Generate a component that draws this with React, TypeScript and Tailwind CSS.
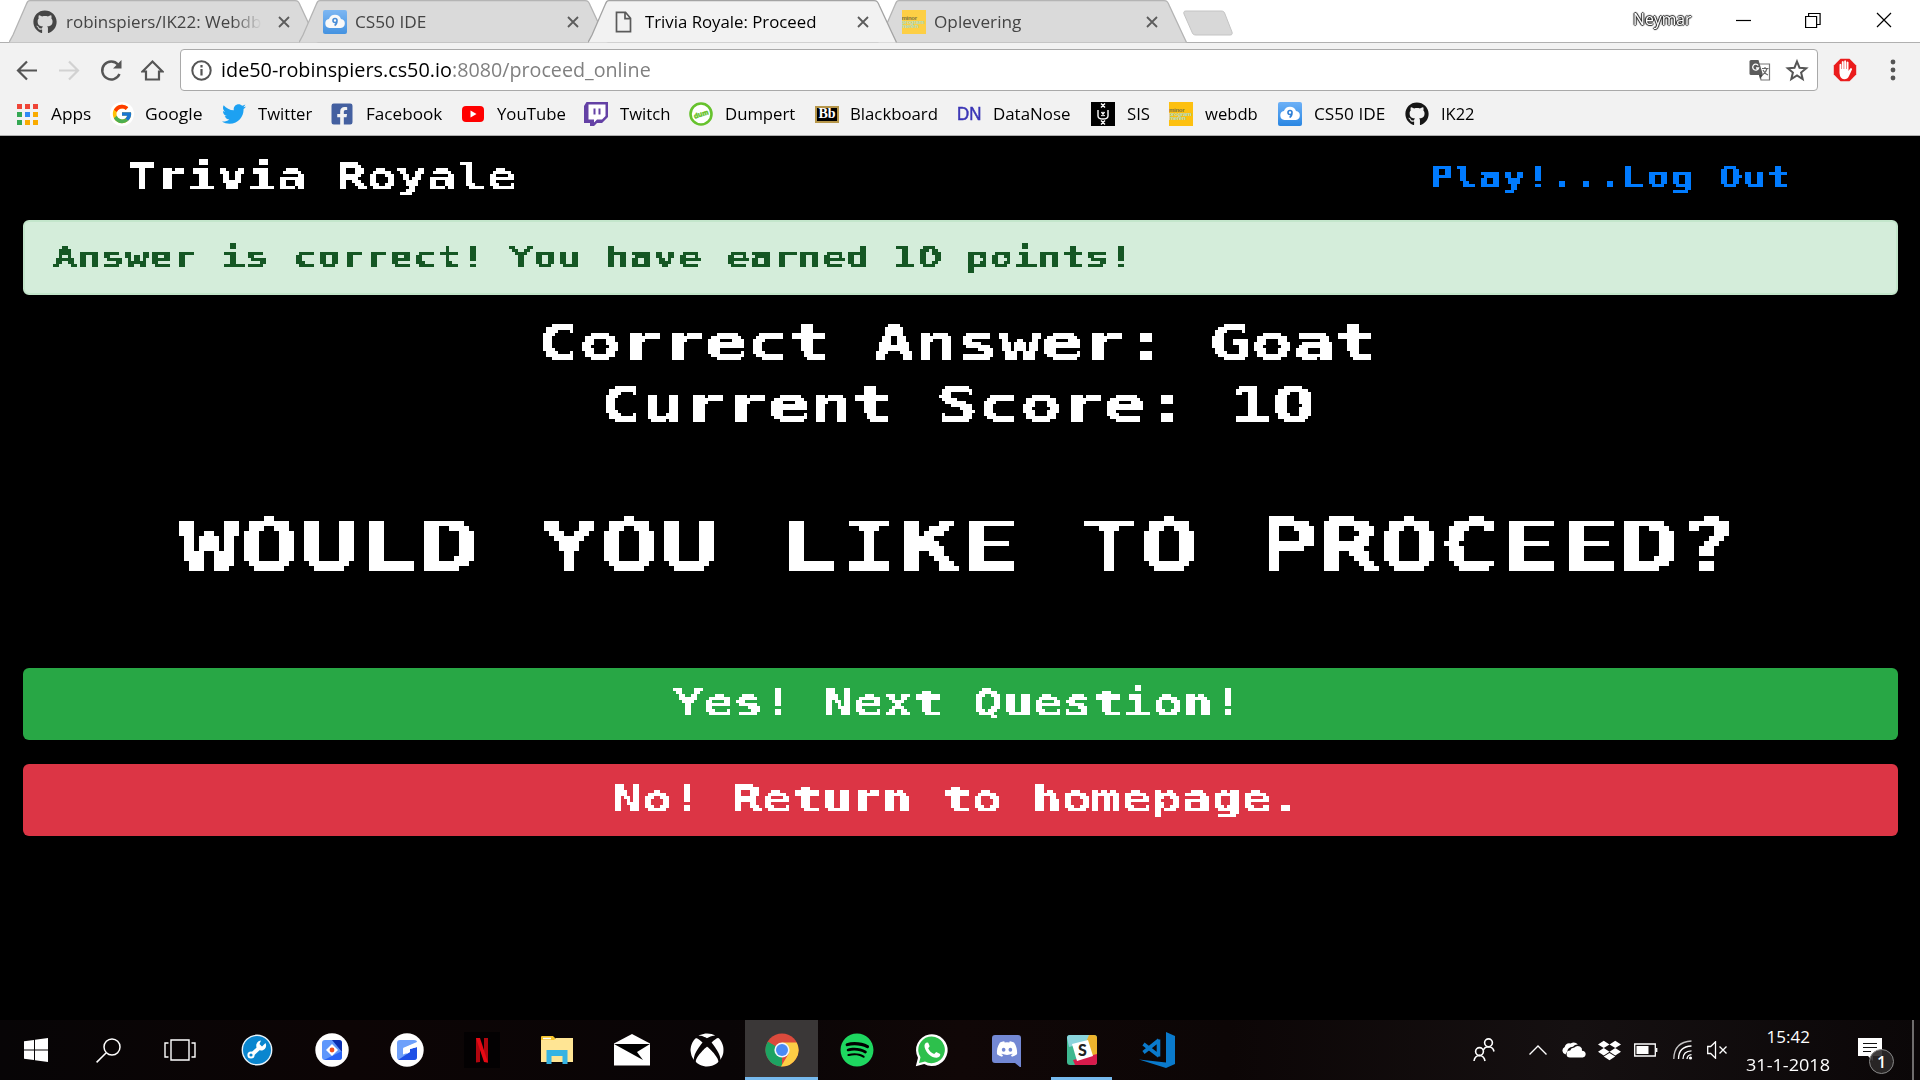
import React, { useLayoutEffect, useRef, useState } from "react";
import { FaDropbox, FaFacebookSquare, FaGithub, FaSpotify, FaTwitter, FaXbox, FaDiscord } from "react-icons/fa";
import { FcGoogle } from "react-icons/fc";

/* Text stretched or condensed horizontally so that it fills a given width. */
function Fit({ w, className = "", children }: { w: number; className?: string; children: React.ReactNode }) {
  const ref = useRef<HTMLSpanElement>(null);
  const [scale, setScale] = useState(1);
  useLayoutEffect(() => {
    if (ref.current) setScale(w / ref.current.offsetWidth);
  }, [w]);
  return (
    <span className="block shrink-0 text-left" style={{ width: w }}>
      <span
        ref={ref}
        className={"inline-block origin-left whitespace-pre " + className}
        style={{ transform: `scaleX(${scale})` }}
      >
        {children}
      </span>
    </span>
  );
}

/* Filter that snaps text to a grid of square cells, for the arcade lettering. */
function Mosaic({ id, cell }: { id: string; cell: number }) {
  const mid = (cell - 1) / 2;
  return (
    <filter id={id} x="0" y="0" width="100%" height="100%" colorInterpolationFilters="sRGB">
      <feGaussianBlur in="SourceGraphic" stdDeviation={cell / 5} result="soft" />
      <feFlood x={mid} y={mid} width="1" height="1" floodColor="#000" />
      <feComposite x="0" y="0" width={cell} height={cell} />
      <feTile result="grid" />
      <feComposite in="soft" in2="grid" operator="in" />
      <feComponentTransfer>
        <feFuncA type="discrete" tableValues="0 1" />
      </feComponentTransfer>
      <feMorphology operator="dilate" radius={mid} />
    </filter>
  );
}

/* A zero without the centre dot, kept to one monospace column. */
function Zero() {
  return (
    <span className="inline-block w-[0.602em] text-center font-['DejaVu_Sans_Condensed','DejaVu_Sans'] leading-none [font-stretch:condensed]">0</span>
  );
}

function CloudNine() {
  return (
    <svg className="size-6" viewBox="0 0 24 24">
      <defs>
        <linearGradient id="c9" x1="0" y1="0" x2="0" y2="1">
          <stop offset="0" stopColor="#6db1f7" />
          <stop offset="1" stopColor="#2a86e2" />
        </linearGradient>
      </defs>
      <rect width="24" height="24" rx="2" fill="url(#c9)" />
      <path d="M6.5 18a4.5 4.5 0 0 1-.6-8.900A6.500 6.500 0 0 1 18 8.900 4.600 4.600 0 0 1 17.800 18z" fill="#fff" />
      <path d="M14 10.500a2 2 0 1 0-2 2c1.400 0 2-1 2-2zc0 2.500-.6 4-2.400 5" fill="none" stroke="#2f7fd6" strokeWidth="1.600" />
    </svg>
  );
}

function Minor({ className }: { className: string }) {
  return (
    <span className={"flex size-6 flex-col justify-center overflow-hidden font-['Liberation_Sans'] text-[6px] leading-[4px] font-bold tracking-[-0.3px] " + className}>
      <span className="text-[#7d7440]">minor</span>
      <span className="text-[#a9dccb]">program</span>
      <span className="text-[#a9dccb]">meren</span>
    </span>
  );
}

function PageIcon() {
  return (
    <svg className="size-6" viewBox="0 0 24 24" fill="none" stroke="#5a5a5a" strokeWidth="1.700">
      <path d="M4.500 2.300h9l5 6v13.400h-14zM13 2.300v6.400h5.500" />
    </svg>
  );
}

function Tab({ icon, title, w, active = false, fade = false }: { icon: React.ReactNode; title: string; w: number; active?: boolean; fade?: boolean }) {
  return (
    <div className={"relative flex h-[43px] w-[289.5px] shrink-0 items-center " + (active ? "z-10" : "")}>
      <svg className="absolute top-0 left-0 h-[43px] w-[309px]" viewBox="0 0 309 43">
        <path
          d="M0 42.500L4 35L17 5C18.500 1.500 19 .7 21 .7H286C289 .7 290 2 291.500 6L305 35L308.500 42.500"
          fill={active ? "#f2f2f2" : "#dadada"}
          stroke={active ? "#a3a3a3" : "#b4b4b4"}
          strokeWidth="1.300"
        />
      </svg>
      <div className="relative flex w-full items-center pl-6">
        <span className="flex w-[32.5px] shrink-0">{icon}</span>
        <span className={"w-[200px] overflow-hidden " + (fade ? "[mask-image:linear-gradient(to_right,black_83%,transparent_98%)]" : "")}>
          <Fit w={w} className={"text-[16px] leading-6 " + (active ? "text-black" : "text-[#444]")}>{title}</Fit>
        </span>
        <svg className="ml-3 size-3 shrink-0" viewBox="0 0 12 12" stroke="#5c5c5c" strokeWidth="1.800">
          <path d="M1 1 11 11M11 1 1 11" />
        </svg>
      </div>
    </div>
  );
}

function AppsIcon() {
  return (
    <span className="grid size-[21px] grid-cols-3 gap-[3px]">
      <i className="bg-[#ef4537]" /><i className="bg-[#ef4537]" /><i className="bg-[#ef4537]" />
      <i className="bg-[#34a853]" /><i className="bg-[#2f8af5]" /><i className="bg-[#f9ab00]" />
      <i className="bg-[#34a853]" /><i className="bg-[#f9ab00]" /><i className="bg-[#f9ab00]" />
    </span>
  );
}

const bookmarks: { name: string; w: number; item: string; off: string; icon: React.ReactNode }[] = [
  { name: "Apps", w: 40, item: "w-[93px]", off: "w-[34px]", icon: <AppsIcon /> },
  { name: "Google", w: 58, item: "w-[112px]", off: "w-[35px]", icon: <span className="flex size-6 items-center justify-center rounded-full bg-white"><FcGoogle className="size-[22px]" /></span> },
  { name: "Twitter", w: 54, item: "w-[108px]", off: "w-[36px]", icon: <FaTwitter className="size-6 text-[#1da1f2]" /> },
  { name: "Facebook", w: 76, item: "w-[131px]", off: "w-[36px]", icon: <FaFacebookSquare className="size-6 text-[#4460a0]" /> },
  {
    name: "YouTube", w: 69, item: "w-[123px]", off: "w-[36px]",
    icon: (
      <svg className="size-6" viewBox="0 0 24 24"><rect x="1" y="4" width="22" height="16" rx="4" fill="#f00" /><path d="M9.500 8.500v7l6-3.500z" fill="#fff" /></svg>
    ),
  },
  {
    name: "Twitch", w: 50, item: "w-[105px]", off: "w-[36px]",
    icon: (
      <svg className="size-6" viewBox="0 0 24 24"><path d="M2.500 0H24v15l-6 6h-5l-3 3H6v-3H0V4z" fill="#6441a5" /><path d="M4.500 2.500h17V14l-3.500 3.500h-5l-3 3v-3H4.500z" fill="#fff" /><path d="M10.500 6.500v6M15.500 6.500v6" stroke="#6441a5" strokeWidth="2" /></svg>
    ),
  },
  {
    name: "Dumpert", w: 70, item: "w-[126px]", off: "w-[36px]",
    icon: (
      <svg className="size-6" viewBox="0 0 24 24"><circle cx="12" cy="12" r="10.500" fill="#fff" stroke="#66c22d" strokeWidth="2.600" /><text x="12" y="14.500" transform="rotate(-18 12 12)" textAnchor="middle" fontFamily="Liberation Sans" fontWeight="bold" fontSize="7" fill="#66c22d" stroke="#66c22d" strokeWidth=".5">dum</text></svg>
    ),
  },
  {
    name: "Blackboard", w: 88, item: "w-[142px]", off: "w-[35px]",
    icon: <span className="flex h-[17px] w-6 items-center justify-center border-2 border-[#b6964a] bg-black font-['Liberation_Serif'] text-[14px] leading-none font-bold text-white">Bb</span>,
  },
  { name: "DataNose", w: 77, item: "w-[134px]", off: "w-[36px]", icon: <Fit w={24} className="font-['Liberation_Sans'] text-[19px] leading-6 text-[#3a35b5] [-webkit-text-stroke:0.5px]">DN</Fit> },
  {
    name: "SIS", w: 23, item: "w-[78px]", off: "w-[36px]",
    icon: (
      <svg className="size-6" viewBox="0 0 24 24" fill="none" stroke="#fff" strokeWidth="1.400"><path d="M0 0h24v24H0z" fill="#000" stroke="none" /><path d="m10 1.500 4 4m0-4-4 4M10 18.500l4 4m0-4-4 4M10.500 10l3 4m0-4-3 4M7 8v6q0 3 5 3t5-3V8" /></svg>
    ),
  },
  { name: "webdb", w: 53, item: "w-[109px]", off: "w-[36px]", icon: <Minor className="bg-[#fdc010]" /> },
  { name: "CS50 IDE", w: 71, item: "w-[127px]", off: "w-[36px]", icon: <CloudNine /> },
  { name: "IK22", w: 34, item: "w-[90px]", off: "w-[36px]", icon: <FaGithub className="size-6 text-[#161616]" /> },
];

function Browser() {
  return (
    <header className="h-[136px] w-full border-b border-[#b0b0b0] bg-[#f2f2f2] font-['Open_Sans',sans-serif] text-black">
      <div className="flex h-[43px] border-b border-[#b0b0b0] bg-white pl-[9px]">
        <Tab icon={<FaGithub className="size-6 text-[#454545]" />} title="robinspiers/IK22: Webdb" w={195} fade />
        <Tab icon={<span className="opacity-85"><CloudNine /></span>} title="CS50 IDE" w={71} />
        <Tab icon={<PageIcon />} title="Trivia Royale: Proceed" w={171} active />
        <Tab icon={<Minor className="bg-[#fdcf45]" />} title="Oplevering" w={87} />
        <svg className="mt-[10px] ml-[15px] h-[26px] w-[52px]" viewBox="0 0 52 26">
          <path d="M4 1H39c2 0 3 .6 3.600 2L50 22c.6 2 0 3-2 3H14c-2 0-3-.6-3.600-2L2 4C1.400 2 2 1 4 1z" fill="#d8d8d8" stroke="#c4c4c4" />
        </svg>
        <div className="ml-auto flex items-start pr-[28px]">
          <div className="mt-[7px] mr-[45px] text-white [text-shadow:1px_0_1px_#222,-1px_0_1px_#222,0_1px_1px_#222,0_-1px_1px_#222]">
            <Fit w={58} className="text-[15.500px] leading-6">Neymar</Fit>
          </div>
          <svg className="mt-3 mr-[53px] h-4 w-4" viewBox="0 0 16 16"><path d="M0 8.500h15" stroke="#000" strokeWidth="1.200" /></svg>
          <svg className="mt-3 mr-[55px] h-4 w-4" viewBox="0 0 16 16" fill="none" stroke="#000" strokeWidth="1.200"><path d="M.6 4.500h11v11H.6zM3.600 4.500v-3h11.500v11h-3.500" /></svg>
          <svg className="mt-3 h-4 w-4" viewBox="0 0 16 16" fill="none" stroke="#000" strokeWidth="1.200"><path d="m1 1 14 14M15 1 1 15" /></svg>
        </div>
      </div>
      <div className="flex h-[54px] items-center">
        <svg className="ml-4 size-[23px]" viewBox="0 0 23 23" fill="none" stroke="#555" strokeWidth="2.200"><path d="M21 11.500H3M11 2.500l-9 9 9 9" /></svg>
        <svg className="ml-[18px] size-[23px]" viewBox="0 0 23 23" fill="none" stroke="#d2d2d2" strokeWidth="2.200"><path d="M2 11.500h18M12 2.500l9 9-9 9" /></svg>
        <svg className="ml-[20px] size-[23px]" viewBox="0 0 23 23"><path d="M19.500 15A9 9 0 1 1 18 5.500" fill="none" stroke="#555" strokeWidth="2.400" /><path d="M21.500 1v8.500H13z" fill="#555" /></svg>
        <svg className="ml-[18px] size-[23px]" viewBox="0 0 23 23" fill="none" stroke="#555" strokeWidth="2.200"><path d="M1.500 12.500 11.500 2.500l10 10h-3.500v8H5v-8z" /></svg>
        <div className="ml-[16px] flex h-[42px] w-[1638px] items-center rounded-[4px] border border-[#a9a9a9] bg-white pl-[10px]">
          <svg className="size-[21px]" viewBox="0 0 21 21" fill="none" stroke="#555" strokeWidth="2"><circle cx="10.500" cy="10.500" r="9.200" /><path d="M10.500 9v6.500M10.500 5v2.400" strokeWidth="2.200" /></svg>
          <div className="ml-[9px] flex text-[20px] leading-8">
            <Fit w={231}>ide50-robinspiers.cs50.io</Fit>
            <Fit w={199} className="text-[#808080]">:8080/proceed_online</Fit>
          </div>
          <svg className="ml-auto size-[22px]" viewBox="0 0 22 22">
            <path d="M9 5h11.500v16H12z" fill="#fff" stroke="#777" strokeWidth="1.200" />
            <path d="M2 1h7.500l4.500 15H2q-1.500 0-1.500-1.500v-12Q.5 1 2 1z" fill="#5b5b5b" />
            <path d="m10 16 4 0-3 4z" fill="#444" />
            <path d="M9.200 6.500A3 3 0 1 0 9.600 9H7" fill="none" stroke="#fff" strokeWidth="1.300" />
            <path d="M13 9.500h6.500M16 8v1.500M18 9.500q-1 4-4 6M14 11q2 4 5 5" fill="none" stroke="#666" strokeWidth="1.200" />
          </svg>
          <svg className="mr-[8px] ml-[14px] size-[24px]" viewBox="0 0 24 24" fill="none" stroke="#555" strokeWidth="2"><path d="m12 3.500 2.500 6.200 6.700.5-5.100 4.300 1.600 6.500-5.700-3.500L6.300 21l1.600-6.500-5.100-4.300 6.700-.5z" /></svg>
        </div>
        <svg className="ml-[15px] size-[24px]" viewBox="0 0 24 24">
          <path d="M7.500.8h9l6.700 6.700v9l-6.700 6.700h-9L.8 16.500v-9z" fill="#ea1c1c" />
          <path d="M6.500 15V6.500q1-1.500 1.800 0V11h.5V3.800q1-1.500 1.900 0V11h.5V3q1-1.500 1.900 0v8h.5V4.300q1-1.400 1.900 0V13l1.900-2.700q2-.5 1.600 1.200L16 18q-1.500 3.500-5 3.300-4-.3-4.500-6.300z" fill="#fff" />
        </svg>
        <svg className="ml-[33px] h-[24px] w-[6px]" viewBox="0 0 6 24" fill="#555"><circle cx="3" cy="4" r="2.400" /><circle cx="3" cy="12" r="2.400" /><circle cx="3" cy="20" r="2.400" /></svg>
      </div>
      <div className="flex h-[34px] items-center pl-[17px]">
        {bookmarks.map((b) => (
          <div key={b.name} className={"flex shrink-0 items-center " + b.item}>
            <span className={"flex shrink-0 items-center " + b.off}>{b.icon}</span>
            <Fit w={b.w} className="text-[16px] leading-6">{b.name}</Fit>
          </div>
        ))}
      </div>
    </header>
  );
}

function Page() {
  return (
    <main className="flex h-[884px] flex-col bg-black px-[23px] font-['DejaVu_Sans_Mono',monospace] font-bold text-white">
      <svg className="absolute size-0" aria-hidden="true">
        <Mosaic id="cell3" cell={3} />
        <Mosaic id="cell5" cell={5} />
      </svg>
      <nav className="flex h-[84px] items-center justify-between pr-[107px] pb-[2px] pl-[104px]">
        <div className="[filter:url(#cell3)]"><Fit w={390} className="text-[36px] leading-[42px]">Trivia Royale</Fit></div>
        <div className="flex text-[28.8px] leading-[40px] text-[#007bff] [filter:url(#cell3)]">
          <Fit w={120}>Play!</Fit>
          <Fit w={72}>...</Fit>
          <Fit w={168}>Log Out</Fit>
        </div>
      </nav>
      <div className="flex h-[75px] w-[1875px] items-center rounded-[6px] border-2 border-[#c3e6cb] bg-[#d4edda] pb-px pl-[28px] text-[#155724]">
        <div className="[filter:url(#cell3)]"><Fit w={1080} className="text-[28.8px] leading-[40px]">Answer is correct! You have earned 1<Zero /> points!</Fit></div>
      </div>
      <div className="mt-[17px] mr-[6px] flex flex-col items-center">
        <div className="[filter:url(#cell3)]"><Fit w={840} className="text-[50.500px] leading-[62px]">Correct Answer: Goat</Fit></div>
        <div className="[filter:url(#cell3)]"><Fit w={714} className="text-[50.500px] leading-[62px]">Current Score: 1<Zero /></Fit></div>
      </div>
      <h1 className="mt-[65px] mr-[2px] flex justify-center">
        <div className="[filter:url(#cell5)]"><Fit w={1560} className="text-[72px] leading-[90px]">WOULD YOU LIKE TO PROCEED?</Fit></div>
      </h1>
      <div className="mt-auto mb-[184px] flex w-[1875px] flex-col gap-6">
        <button className="flex h-[72px] items-center justify-center rounded-[6px] bg-[#28a745] pr-[5px] pb-[2px]">
          <div className="[filter:url(#cell3)]"><Fit w={570} className="text-[36px] leading-[42px]">Yes! Next Question!</Fit></div>
        </button>
        <button className="flex h-[72px] items-center justify-center rounded-[6px] bg-[#dc3545] pr-[7px] pb-[2px]">
          <div className="[filter:url(#cell3)]"><Fit w={690} className="text-[36px] leading-[42px]">No! Return to homepage.</Fit></div>
        </button>
      </div>
    </main>
  );
}

const Wrench = () => (
  <svg className="size-[32px]" viewBox="0 0 32 32"><circle cx="16" cy="16" r="14.700" fill="#0a86cf" stroke="#e8f3fa" strokeWidth="1.400" /><path d="m10 21.500 9-8.500" stroke="#fff" strokeWidth="4" /><circle cx="10" cy="21" r="2.600" fill="#0a86cf" stroke="#fff" strokeWidth="2" /><path d="M24.500 9a5 5 0 1 1-4.500-2.500l-1.500 3.500 2.500 2.500z" fill="#fff" /></svg>
);
const ClashOne = () => (
  <svg className="size-[34px]" viewBox="0 0 34 34"><circle cx="17" cy="17" r="16.700" fill="#fff" /><rect x="7" y="7" width="20" height="20" rx="3" fill="#5f97fb" /><path d="M17 7h7q3 0 3 3v9z" fill="#0b2fb0" /><path d="m9 27 18-9v6q0 3-3 3z" fill="#2a63f5" /><path d="m17 11 6 6-6 6-6-6z" fill="#fff" /><circle cx="17" cy="17" r="2.400" fill="#f0501e" /></svg>
);
const ClashTwo = () => (
  <svg className="size-[34px]" viewBox="0 0 34 34"><circle cx="17" cy="17" r="16.700" fill="#fff" /><path d="M10 7h14q3 0 3 2l-14 6 4 6 10-4v7q0 3-3 3H10q-3 0-3-3V10q0-3 3-3z" fill="#6ea0fb" /><path d="m8 27 12-8v-3l7-2v10q0 3-3 3z" fill="#1e50e6" /><path d="M27 9.500 13 15.500v6l7-2.500v-3l7-2z" fill="#fff" /></svg>
);
const Netflix = () => (
  <svg className="h-[36px] w-[36px]" viewBox="0 0 36 36"><path d="M0 0h36v36H0z" fill="#030102" /><path d="M12 6h4v24l-4 .5zM20 6h4v24.500l-4-.5z" fill="#b1060f" /><path d="M12 6h4l8 24.500-4-.5z" fill="#e50914" /></svg>
);
const Folder = () => (
  <svg className="h-[30px] w-[32px]" viewBox="0 0 32 30"><path d="M0 2q0-1 1-1h11l3 3v4H0z" fill="#f7c52d" /><path d="M2 3.500h8" stroke="#fff" strokeWidth="1.500" /><path d="M15 3h17v24H0V5h13z" fill="#ffe594" /><path d="M5.500 29V15h21v14h-5v-8h-11v8z" fill="#35b3e3" /></svg>
);
const Mail = () => (
  <svg className="h-[32px] w-[36px]" viewBox="0 0 36 32"><path d="M0 9.500 18 0l18 9.500v22H0z" fill="#fff" /><path d="M0 10h36L23 18l6 8z" fill="#000" /></svg>
);
const Chrome = () => (
  <svg className="size-[34px]" viewBox="0 0 34 34"><circle cx="17" cy="17" r="16.500" fill="#db4a3c" /><path d="M17 17 2.700 8.700A16.500 16.500 0 0 0 17 33.500z" fill="#1da362" /><path d="M17 9.500h14.700A16.500 16.500 0 0 1 16 33.500L24 20z" fill="#fdcd45" /><path d="M2.700 8.700 10 21l7-4z" fill="#1da362" /><circle cx="17" cy="17" r="7.600" fill="#f4f6f8" /><circle cx="17" cy="17" r="6" fill="#4a8af4" /></svg>
);
const WhatsApp = () => (
  <svg className="size-[34px]" viewBox="0 0 34 34"><path d="M.8 33.200 3 24.800A15.800 15.800 0 1 1 9.200 31z" fill="#fff" /><path d="M4 30l1.500-5.800A13.300 13.300 0 1 1 10 28.400z" fill="#2dc04c" /><path d="M12 9.500c-2 .3-3 2.500-2.300 5 1.500 5.500 7 10.500 12 10.300 2.300-.3 4-2 3.500-3.800l-4-2-2 2c-3-1-5-3.200-6-5.700l1.500-2-1.500-3.600z" fill="#fff" /></svg>
);
const Discord = () => (
  <span className="relative flex h-[34px] w-[29px] justify-center">
    <svg className="absolute inset-0 h-[34px] w-[29px]" viewBox="0 0 29 34"><path d="M3 2h23q3 0 3 3v30l-6-5H3q-3 0-3-3V5q0-3 3-3z" fill="#7388d4" /></svg>
    <FaDiscord className="relative mt-[5px] size-[22px] text-white" />
  </span>
);
const Slack = () => (
  <svg className="size-[30px]" viewBox="0 0 30 30"><rect width="30" height="30" rx="3" fill="#3eb890" /><path d="M0 3q0-3 3-3h20l-3 7-18 5z" fill="#8ad4dc" /><path d="M22 0h5q3 0 3 3v18l-7 1-4-15z" fill="#ecb32d" /><path d="m6 25 24-6v8q0 3-3 3H8z" fill="#d91b4c" /><path d="m5 9 16-4 5 16-16 5z" fill="#fff" /><text x="15.500" y="21" textAnchor="middle" fontFamily="Lato" fontWeight="900" fontSize="16" fill="#222">S</text></svg>
);
const Code = () => (
  <svg className="size-[36px]" viewBox="0 0 36 36"><path d="m27 0 9 4v28l-9 4L0 27.500l27 3z" fill="#0a7acc" /><path d="M19.500 7.500v17M20 8 4.500 20.500M4.500 12 20 24" fill="none" stroke="#0a7acc" strokeWidth="3.600" /></svg>
);

function Slot({ children, active = false, open = false }: { children: React.ReactNode; active?: boolean; open?: boolean }) {
  return (
    <div className="flex h-[60px] w-[75px] shrink-0 justify-center">
      <div className={"relative flex h-full w-[73px] items-center justify-center " + (active ? "bg-[#3a3737]" : "")}>
        {children}
        {active && <span className="absolute inset-x-0 bottom-0 h-[3px] bg-[#76b9ed]" />}
        {open && <span className="absolute inset-x-[6px] bottom-0 h-[3px] bg-[#76b9ed]" />}
      </div>
    </div>
  );
}

function Taskbar() {
  return (
    <footer className="flex h-[60px] items-center bg-[#080506] bg-[linear-gradient(90deg,#070506_0%,#0c0505_18%,#090506_38%,#100707_50%,#0c0606_64%,#151011_82%,#0b0708_100%)] text-white">
      <div className="flex w-[72px] justify-center">
        <svg className="h-[24px] w-[24px]" viewBox="0 0 24 24" fill="#fff"><path d="M0 3.300 10 2v9.400H0zM11 1.800 24 0v11.400H11zM0 12.500h10V22L0 20.700zM11 12.500h13V24l-13-1.800z" /></svg>
      </div>
      <div className="flex w-[72px] justify-center">
        <svg className="h-[25px] w-[25px]" viewBox="0 0 25 25" fill="none" stroke="#fff" strokeWidth="1.500"><circle cx="16" cy="9" r="8" /><path d="M10 15 .6 24.400" /></svg>
      </div>
      <div className="flex w-[75px] justify-center pr-[3px]">
        <svg className="h-[24px] w-[32px]" viewBox="0 0 32 24" fill="none" stroke="#fff" strokeWidth="1.400"><path d="M7 2h18v20H7zM4.500 5H1v14h3.500M27.500 5H31v14h-3.500" /></svg>
      </div>
      <Slot><Wrench /></Slot>
      <Slot><ClashOne /></Slot>
      <Slot><ClashTwo /></Slot>
      <Slot><Netflix /></Slot>
      <Slot><Folder /></Slot>
      <Slot><Mail /></Slot>
      <Slot><FaXbox className="size-[34px]" /></Slot>
      <Slot active><Chrome /></Slot>
      <Slot><span className="flex size-[30px] items-center justify-center rounded-full bg-black"><FaSpotify className="size-[34px] shrink-0 text-[#1ed760]" /></span></Slot>
      <Slot><WhatsApp /></Slot>
      <Slot><Discord /></Slot>
      <Slot open><Slack /></Slot>
      <Slot><Code /></Slot>
      <div className="ml-auto flex h-full items-center font-['Open_Sans',sans-serif]">
        <svg className="mr-[34px] h-[24px] w-[22px]" viewBox="0 0 22 24" fill="none" stroke="#fff" strokeWidth="1.600"><circle cx="15.500" cy="4.800" r="3.900" /><path d="M10.500 12q1-3 5-3.200 4.500.2 5.500 4.700" /><circle cx="6.500" cy="13.500" r="3.900" /><path d="M1 23q.8-5.300 5.500-5.500Q11 17.700 12 23" /></svg>
        <svg className="mr-[15px] h-[10px] w-[18px]" viewBox="0 0 18 10" fill="none" stroke="#fff" strokeWidth="1.400"><path d="m.5 9.500 8.500-8.500 8.500 8.500" /></svg>
        <svg className="mr-[12px] h-[16px] w-[24px]" viewBox="0 0 24 16" fill="#fff"><path d="M3.500 12.500A4 4 0 0 1 2.700 5 5 5 0 0 1 8.500 1.500 6 6 0 0 1 16 2.500q-3-.3-5 2.200-5.500.3-5.700 5-1.300 1-1.800 2.800z" /><path d="M8 15.500a3.500 3.500 0 0 1 .2-7Q9 5.500 12 5.800 14.500 3 18 4.500q2.500 1.500 2 4.200 3.500.3 3.700 3.300-.2 3-3 3.500z" /></svg>
        <FaDropbox className="mr-[13px] size-[23px]" />
        <svg className="mr-[15px] h-[14px] w-[24px]" viewBox="0 0 24 14" fill="none" stroke="#fff" strokeWidth="1.300"><path d="M.7 1h20.600v12H.7zM22.700 5v4" /><path d="M2.500 3h12v8h-12z" fill="#fff" stroke="none" /></svg>
        <svg className="mr-[14px] h-[20px] w-[20px]" viewBox="0 0 20 20" fill="none" stroke="#fff" strokeWidth="1.300"><path d="M.8 19Q1 2 18.500 1" opacity=".75" /><path d="M5.500 19Q5.500 6.500 18.500 6M10 19q0-8 8.500-8.200M14 19q.3-4 4.500-4.300" /><circle cx="17.500" cy="18" r="1.600" fill="#fff" stroke="none" /></svg>
        <svg className="mr-[17px] h-[18px] w-[21px]" viewBox="0 0 21 18" fill="none" stroke="#fff" strokeWidth="1.300"><path d="M.7 5.500h3L8.500.8v16.400l-4.800-4.700h-3zM12.500 5.500l7 7M19.500 5.500l-7 7" /></svg>
        <div className="flex w-[86px] flex-col items-center pt-px">
          <Fit w={43} className="text-[17px] leading-[28px]">15:42</Fit>
          <Fit w={84} className="text-[17px] leading-[28px]">31-1-2018</Fit>
        </div>
        <div className="relative ml-[27px] size-[36px]">
          <svg className="absolute top-[6px] left-0 h-[25px] w-[25px]" viewBox="0 0 25 25"><path d="M0 0h24v18H15v5l-5-5H0z" fill="#fff" /><path d="M5 5.500h14M5 9.500h14M5 13.500h8" stroke="#111" strokeWidth="1.200" /></svg>
          <span className="absolute top-[17px] left-[11px] flex size-[25px] items-center justify-center rounded-full border border-[#888] bg-[#2b2929]/90 text-[16px] font-semibold">1</span>
        </div>
        <span className="mr-[6px] ml-[18px] h-full w-[2px] bg-[#6f6d6d]" />
      </div>
    </footer>
  );
}

export default function App() {
  return (
    <div className="h-[1080px] w-[1920px] overflow-hidden bg-black">
      <Browser />
      <Page />
      <Taskbar />
    </div>
  );
}
